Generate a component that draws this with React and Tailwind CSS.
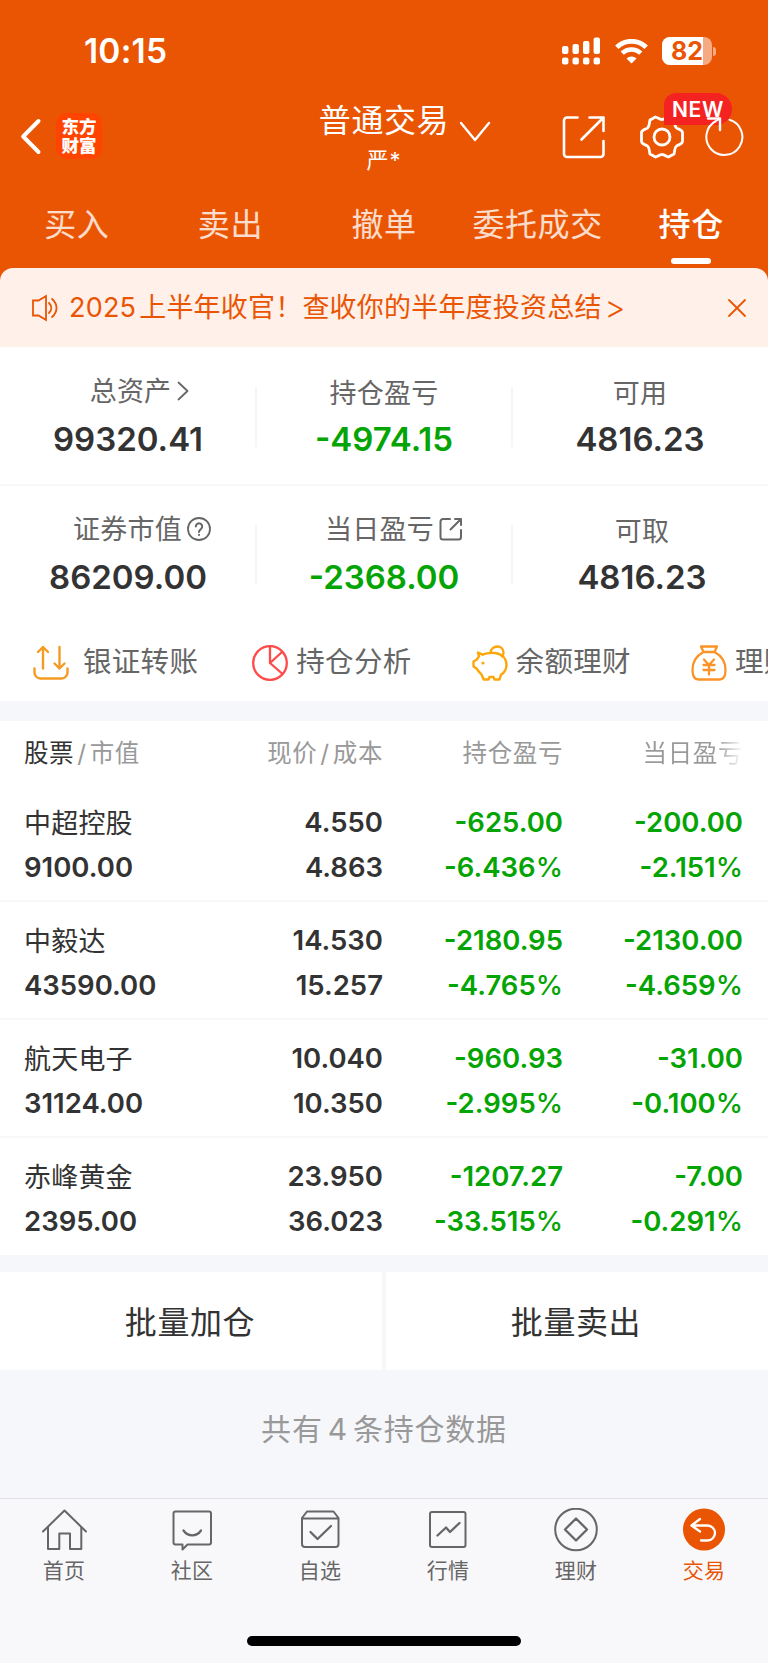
import React, { useState } from 'react';

const tabs = ['买入', '卖出', '撤单', '委托成交', '持仓'];

const holdings = [
  { name: '中超控股', value: '9100.00', price: '4.550', cost: '4.863', profit: '-625.00', profitRate: '-6.436', day: '-200.00', dayRate: '-2.151' },
  { name: '中毅达', value: '43590.00', price: '14.530', cost: '15.257', profit: '-2180.95', profitRate: '-4.765', day: '-2130.00', dayRate: '-4.659' },
  { name: '航天电子', value: '31124.00', price: '10.040', cost: '10.350', profit: '-960.93', profitRate: '-2.995', day: '-31.00', dayRate: '-0.100' },
  { name: '赤峰黄金', value: '2395.00', price: '23.950', cost: '36.023', profit: '-1207.27', profitRate: '-33.515', day: '-7.00', dayRate: '-0.291' },
];

// --- Icons ---
const Icon = ({ w, h, sw = 2, className = '', children }) => (
  <svg
    width={w}
    height={h}
    viewBox={`0 0 ${w} ${h}`}
    fill="none"
    stroke="currentColor"
    strokeWidth={sw}
    strokeLinecap="round"
    strokeLinejoin="round"
    className={`shrink-0 ${className}`}
  >
    {children}
  </svg>
);

const SignalIcon = () => (
  <svg width="39" height="28" viewBox="0 0 39 28" fill="currentColor" className="shrink-0">
    <rect x="0" y="9" width="6.4" height="8" rx="2" />
    <rect x="10.5" y="7" width="6.4" height="10" rx="2" />
    <rect x="21" y="4" width="6.4" height="13" rx="2" />
    <rect x="31.6" y="0.5" width="6.4" height="16.5" rx="2" />
    <rect x="0" y="20.5" width="6.4" height="7" rx="2" />
    <rect x="10.5" y="20.5" width="6.4" height="7" rx="2" />
    <rect x="21" y="20.5" width="6.4" height="7" rx="2" />
    <rect x="31.6" y="20.5" width="6.4" height="7" rx="2" />
  </svg>
);

const WifiIcon = () => (
  <svg width="33" height="25" viewBox="0 0 33 25" fill="none" stroke="currentColor" className="shrink-0">
    <path d="M1.8 8.2a21.2 21.2 0 0 1 29.4 0" strokeWidth="4.8" />
    <path d="M7.2 14.2a13.4 13.4 0 0 1 18.6 0" strokeWidth="4.6" />
    <path d="M16.5 24.600l-5-5a7.200 7.200 0 0 1 10 0z" fill="currentColor" stroke="none" />
  </svg>
);

// --- Status bar ---
const StatusBar = () => (
  <div className="flex h-[102px] items-center pl-[84px] pr-[52px]">
    <span className="pt-[2px] text-[33.500px] font-semibold leading-none tracking-[0.200px]">10:15</span>
    <div className="ml-auto flex items-center">
      <SignalIcon />
      <div className="ml-[14px]"><WifiIcon /></div>
      <div className="ml-[14px] flex h-7 w-[50px] items-center overflow-hidden rounded-[8px] bg-white/50">
        <div className="flex h-full w-[41px] items-center justify-end bg-white text-[25px] font-bold leading-none text-[#EA5504]">
          82
        </div>
      </div>
      <div className="ml-[1px] h-[9px] w-[3px] rounded-r-full bg-white/50" />
    </div>
  </div>
);

const TitleBar = () => (
  <div className="flex h-[80px] items-start">
    <div className="flex w-[320px] items-center pl-[20px] pt-[11px]">
      <Icon w={22} h={38} sw={4}><path d="M18.500 4L3.200 19.500 18.500 35" /></Icon>
      <div className="ml-[14px] flex h-[46px] w-[46px] flex-col items-center justify-center rounded-[11px] bg-[#FF4400] text-[17.5px] font-black leading-[19px]">
        <span>东方</span>
        <span>财富</span>
      </div>
    </div>
    <div className="flex w-[128px] flex-col items-center pt-[1px]">
      <span className="whitespace-nowrap text-[32px] leading-[36px] tracking-[0.6px]">普通交易</span>
      <span className="mt-[10px] text-[22px] leading-[22px] tracking-[1px]">严*</span>
    </div>
    <Icon w={32} h={22} sw={2.4} className="ml-[11px] mt-[19px]"><path d="M2 2l14 17L30 2" /></Icon>
    <div className="flex pt-[13px]">
      <Icon w={44} h={44} sw={2.6} className="ml-[71px]">
        <path d="M15.500 2.500H5a3 3 0 0 0-3 3V39a3 3 0 0 0 3 3h33.500a3 3 0 0 0 3-3V26" />
        <path d="M27.500 2.500h14V16M41.500 2.500L19.500 24.500" />
      </Icon>
      <div className="relative ml-[33px]">
        <Icon w={46} h={44} sw={2.8}>
          <path d="M23 4.500C20.500 4.500 18.500 2.500 16.500 2L11 5C10 8 11 11 8.500 13 6.500 14.500 3 14.500 2.500 17.500V26.500C3 29.500 6.500 29.500 8.500 31 11 33 10 36 11 39L16.500 42C18.500 41.500 20.500 39.500 23 39.500S27.500 41.500 29.500 42L35 39C36 36 35 33 37.500 31 39.500 29.500 43 29.500 43.500 26.500V17.500C43 14.500 39.500 14.500 37.500 13 35 11 36 8 35 5L29.500 2C27.500 2.500 25.500 4.500 23 4.500Z" />
          <circle cx="23" cy="22" r="8" />
        </Icon>
        <div className="absolute -top-[22px] left-[25px] flex h-[32px] w-[68px] items-center justify-center rounded-[16px] rounded-bl-none rounded-tl-[12px] bg-[#F52222] text-[21px] font-semibold leading-none tracking-[0.7px]">
          NEW
        </div>
      </div>
      <Icon w={40} h={44} sw={2} className="relative ml-[19px]">
        <path d="M25.500 4.700A18 18 0 1 1 12 6L16 3.500" />
        <path d="M4 3.500h12v11.500" strokeWidth="2.4" />
      </Icon>
    </div>
  </div>
);

// --- Account summary ---
const SummaryCell = ({ label, icon, value, green, shift, className }) => (
  <div className={`flex w-1/3 flex-col items-center ${className || ''}`}>
    <div className={`flex h-[36px] items-center text-[27px] leading-none tracking-[0.2px] text-[#666] ${shift || ''}`}>
      {label}
      {icon}
    </div>
    <div className={`mt-[13px] text-[33px] font-semibold leading-[34px] ${green ? 'text-[#04A404]' : 'text-[#333]'}`}>
      {value}
    </div>
  </div>
);

const Divider = () => <div className="-mx-px mt-[14px] h-[60px] w-[2px] shrink-0 bg-[#F6F6F8]" />;

const Shortcut = ({ children, label }) => (
  <div className="flex w-[219.300px] shrink-0 items-center">
    {children}
    <span className="whitespace-nowrap text-[28.500px] leading-none tracking-[0.3px]">{label}</span>
  </div>
);

// --- Holdings table ---
const Percent = ({ value }) => (
  <div>
    {value}
    <span className="font-medium">%</span>
  </div>
);

const HoldingRow = ({ item, last }) => (
  <div className={`flex h-[118px] px-[24px] pt-[16px] text-[27.500px] font-semibold leading-[44.500px] ${last ? '' : 'border-b-2 border-[#F8F8FA]'}`}>
    <div className="w-[178px]">
      <div className="translate-y-[2px] text-[27px] font-normal tracking-[0.2px]">{item.name}</div>
      <div>{item.value}</div>
    </div>
    <div className="w-[181px] text-right">
      <div>{item.price}</div>
      <div>{item.cost}</div>
    </div>
    <div className="w-[180px] text-right text-[#04A404]">
      <div>{item.profit}</div>
      <Percent value={item.profitRate} />
    </div>
    <div className="w-[180px] text-right text-[#04A404]">
      <div>{item.day}</div>
      <Percent value={item.dayRate} />
    </div>
  </div>
);

const navItems = [
  {
    label: '首页',
    icon: (
      <>
        <path d="M2 23.500L23.500 2.500 45 23.500" />
        <path d="M7 19.500v21.500h11.300V25.500H29V41h11.300V19.500" />
      </>
    ),
  },
  {
    label: '社区',
    icon: (
      <>
        <path d="M6.500 3.500h33.500a2 2 0 0 1 2 2v29a2 2 0 0 1-2 2H18.500l-5 5v-5h-7a2 2 0 0 1-2-2v-29a2 2 0 0 1 2-2z" />
        <path d="M14.500 22.500c4.500 6.500 13 6.500 17.500 0" strokeWidth="2.3" />
      </>
    ),
  },
  {
    label: '自选',
    icon: (
      <>
        <path d="M5 10l5-6.500h26.500l5 6.500v26a3 3 0 0 1-3 3H8a3 3 0 0 1-3-3zM5 10.500h36.500" />
        <path d="M13.500 24l7 7 13.500-13" strokeWidth="2.3" />
      </>
    ),
  },
  {
    label: '行情',
    icon: (
      <>
        <rect x="5" y="4" width="35.500" height="35" rx="2" />
        <path d="M12.500 27.500l8.500-8 4 4.500 9.500-9" strokeWidth="2.3" />
      </>
    ),
  },
  {
    label: '理财',
    icon: (
      <>
        <circle cx="23" cy="21.500" r="20.800" />
        <path d="M23 10.500l11 11-11 11-11-11z" strokeWidth="2.3" />
      </>
    ),
  },
  {
    label: '交易',
    icon: (
      <>
        <circle cx="23" cy="21.500" r="21" fill="#EA5504" stroke="none" />
        <path d="M19 11L10.500 17.500l8.500 6M11.500 17.500h15a7.500 7.500 0 0 1 0 15h-6.500" stroke="#fff" strokeWidth="2.3" />
      </>
    ),
  },
];

const App = () => {
  const [activeTab, setActiveTab] = useState('持仓');
  const [showNotice, setShowNotice] = useState(true);

  return (
    <div className="flex h-[1663px] w-[768px] flex-col overflow-hidden bg-[#F6F7FA] font-['Inter','Noto_Sans_CJK_SC',sans-serif] text-[#333]">
      {/* Header */}
      <header className="h-[268px] shrink-0 bg-[#EA5504] text-white">
        <StatusBar />
        <TitleBar />
        <nav className="flex h-[86px]">
          {tabs.map((tab) => (
            <button
              key={tab}
              onClick={() => setActiveTab(tab)}
              className={`flex w-1/5 flex-col items-center pt-[22px] text-[32px] leading-[42px] tracking-[0.6px] ${
                tab === activeTab ? 'font-medium' : 'text-white/80'
              }`}
            >
              {tab}
              {tab === activeTab && <span className="mt-[12px] h-[6px] w-[40px] rounded-full bg-white" />}
            </button>
          ))}
        </nav>
      </header>

      {/* Notice */}
      <div className="h-[79px] shrink-0 bg-[#EA5504]">
        {showNotice && (
          <div className="flex h-full items-center rounded-t-[13px] bg-[#FFF0E9] pl-[31px] pr-[21px] text-[#EA5504]">
            <Icon w={28} h={28} sw={1.800}>
              <path d="M2 6.500h5.500L15 2v24l-7.500-4.500H2z" strokeLinejoin="miter" />
              <path d="M18 9c3 3 3 7 0 10M21 5c6 5 6 13 0 18" />
            </Icon>
            <span className="ml-[10px] whitespace-nowrap text-[27px] leading-none tracking-[0.200px]">
              2025<span className="ml-[3px]">上半年收官！查收你的半年度投资总结</span>
            </span>
            <span className="ml-[3px] text-[32px] font-light leading-none">&gt;</span>
            <button className="ml-auto" onClick={() => setShowNotice(false)}>
              <Icon w={20} h={20} sw={1.800}><path d="M2 2l16 16M18 2L2 18" /></Icon>
            </button>
          </div>
        )}
      </div>

      {/* Summary */}
      <section className="h-[354px] shrink-0 bg-white">
        <div className="flex h-[139px] border-b-2 border-[#F8F8FA] pt-[26px]">
          <SummaryCell
            label="总资产"
            value="99320.41"
            shift="pl-[23px]"
            icon={<Icon w={12} h={20} sw={1.800} className="ml-[6px]"><path d="M1.500 1.500L10.500 10l-9 8.500" /></Icon>}
          />
          <Divider />
          <SummaryCell label="持仓盈亏" value="-4974.15" green shift="pt-[4px]" />
          <Divider />
          <SummaryCell label="可用" value="4816.23" shift="pt-[4px]" />
        </div>
        <div className="flex h-[130px] pt-[25px]">
          <SummaryCell
            label="证券市值"
            value="86209.00"
            shift="pl-[28px]"
            icon={
              <Icon w={24} h={24} sw={1.800} className="ml-[5px]">
                <circle cx="12" cy="12" r="11" />
                <path d="M8.800 9.500a3.200 3.200 0 1 1 5.200 2.500c-1.300 1-2 1.600-2 3M12 17.800v.2" strokeWidth="2" />
              </Icon>
            }
          />
          <Divider />
          <SummaryCell
            label="当日盈亏"
            value="-2368.00"
            green
            shift="pl-[20px]"
            icon={
              <Icon w={24} h={24} sw={2} className="ml-[5px]">
                <path d="M11 2H4a2.500 2.500 0 0 0-2.500 2.500V20A2.500 2.500 0 0 0 4 22.500h15.500A2.500 2.500 0 0 0 22 20v-7" />
                <path d="M16 2h6v6M22 2L11.500 12.500" />
              </Icon>
            }
          />
          <Divider />
          <SummaryCell label="可取" value="4816.23" shift="pt-[4px]" className="pl-[4px]" />
        </div>
        <div className="flex h-[85px] items-center overflow-hidden pl-[33px] pt-[8px] text-[#666]">
          <Shortcut label="银证转账">
            <Icon w={36} h={36} sw={2.400} className="mr-[14px] text-[#F59A23]">
              <path d="M1.500 23.500v4a6 6 0 0 0 6 6h21a6 6 0 0 0 6-6v-4" />
              <path d="M10 23.500V2M5 7l5-5 5 5M26.500 2v21.500M21.500 18.500l5 5 5-5" />
            </Icon>
          </Shortcut>
          <Shortcut label="持仓分析">
            <Icon w={36} h={36} sw={2.300} className="mr-[8px] text-[#FF4A4A]">
              <circle cx="18" cy="18" r="16.800" />
              <path d="M18 1.500V18l12 10.500M18 18L30 7" />
            </Icon>
          </Shortcut>
          <Shortcut label="余额理财">
            <Icon w={36} h={36} sw={2.400} className="mr-[8px] text-[#FCA60A]">
              <path d="M6 7.500l4.500 2.200C14 8 18 7.500 23 8c7 1 11.500 5.500 11.500 12 0 4-2 7.500-5.500 9.800L27.500 34.500h-5l-1-2.500h-4l-1 2.500h-4.800L9.500 29.500C7 27 5.500 25 4.500 23.500L1.500 21.500v-5L5 14.500c.5-1.500 1.200-2 2-3z" />
              <path d="M18.500 7.500c1-7.500 12.500-8.500 13 0 .1 2-.5 3-1.500 4" />
              <circle cx="11" cy="18" r="1" fill="currentColor" strokeWidth="1.200" />
            </Icon>
          </Shortcut>
          <Shortcut label="理财">
            <Icon w={36} h={36} sw={2.300} className="mr-[8px] text-[#FB9327]">
              <path d="M10 1.500h16l-2.500 5.500h-11zM12.500 7C5 11 1.500 18 1.500 25c0 6 1.500 9.500 6 9.500h21c4.500 0 6-3.500 6-9.500 0-7-3.500-14-11-18" />
              <path d="M13 14.500l5 5.500 5-5.500M18 20v9.500M12.500 20h11M12.500 25h11" />
            </Icon>
          </Shortcut>
        </div>
      </section>

      {/* Holdings */}
      <section className="mt-[20px] h-[534px] shrink-0 bg-white">
        <div className="flex h-[63px] items-center px-[24px] pt-[2px] text-[24.500px] leading-none tracking-[0.600px] text-[#999]">
          <div className="w-[178px]">
            <span className="text-[#333]">股票</span>
            <span className="mx-[3px]">/</span>市值
          </div>
          <div className="w-[181px] text-right">现价<span className="mx-[3px]">/</span>成本</div>
          <div className="w-[180px] text-right">持仓盈亏</div>
          <div className="w-[180px] bg-linear-to-r from-[#999] from-85% to-white to-100% bg-clip-text text-right text-transparent">当日盈亏</div>
        </div>
        {holdings.map((item, i) => (
          <HoldingRow key={item.name} item={item} last={i === holdings.length - 1} />
        ))}
      </section>

      {/* Batch actions */}
      <div className="mt-[17px] flex h-[98px] shrink-0 gap-[4px] text-[32px] tracking-[0.600px]">
        <button className="flex-1 bg-white pr-[2px] pt-[3px]">批量加仓</button>
        <button className="flex-1 bg-white pr-[2px] pt-[3px]">批量卖出</button>
      </div>
      <div className="flex h-[128px] shrink-0 items-center justify-center pb-[9px] text-[30px] tracking-[0.800px] text-[#999]">
        共有<span className="mx-[5px]">4</span>条持仓数据
      </div>

      {/* Bottom navigation */}
      <footer className="flex flex-1 flex-col items-center border-t border-[#E0E1E5] bg-[#F8F8FB]">
        <div className="flex w-full pt-[9px]">
          {navItems.map((item) => (
            <div
              key={item.label}
              className={`flex w-1/6 flex-col items-center text-[21px] leading-[30px] tracking-[0.300px] ${
                item.label === '交易' ? 'text-[#EA5504]' : 'text-[#666]'
              }`}
            >
              <Icon w={46} h={44} sw={2}>{item.icon}</Icon>
              <span className="mt-[4px]">{item.label}</span>
            </div>
          ))}
        </div>
        <div className="mb-[17px] mt-auto h-[10px] w-[274px] rounded-full bg-black" />
      </footer>
    </div>
  );
};

export default App;
